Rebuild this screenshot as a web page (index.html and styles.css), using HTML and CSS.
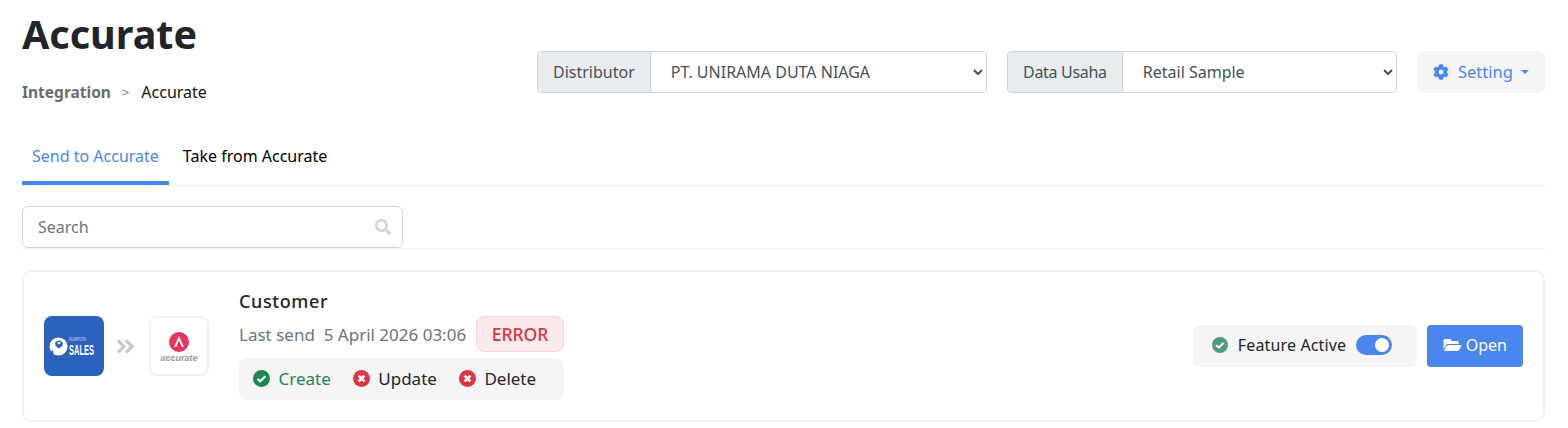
FILE: index.html
```html
<!DOCTYPE html>
<html lang="en">
<head>
    <meta charset="UTF-8">
    <meta name="viewport" content="width=device-width, initial-scale=1.0">
    <title>Accurate</title>
    <link rel="stylesheet" href="styles.css">
</head>
<body>

    <div class="page">
        <div class="page-head">
            <div class="page-title">
                <h1>Accurate</h1>
                <div class="breadcrumb">
                    <b>Integration</b>
                    <span class="crumb-sep">&gt;</span>
                    <span>Accurate</span>
                </div>
            </div>

            <div class="page-tools">
                <div class="input-group group-distributor">
                    <span class="group-label">Distributor</span>
                    <select class="group-select">
                        <option>PT. UNIRAMA DUTA NIAGA</option>
                    </select>
                </div>
                <div class="input-group group-usaha">
                    <span class="group-label">Data Usaha</span>
                    <select class="group-select">
                        <option>Retail Sample</option>
                    </select>
                </div>
                <button class="setting-button">
                    <svg class="icon" viewBox="0 0 512 512"><path d="M487.4 315.7l-42.6-24.6c4.3-23.2 4.3-47 0-70.2l42.6-24.6c4.9-2.8 7.1-8.6 5.5-14-11.1-35.6-30-67.8-54.7-94.6-3.8-4.1-10-5.1-14.8-2.3L380.8 110c-17.9-15.4-38.5-27.3-60.8-35.1V25.8c0-5.6-3.9-10.5-9.4-11.7-36.7-8.2-74.3-7.8-109.2 0-5.5 1.2-9.4 6.1-9.4 11.7V75c-22.2 7.9-42.8 19.8-60.8 35.1L88.7 85.5c-4.9-2.8-11-1.9-14.8 2.3-24.7 26.7-43.6 58.9-54.7 94.6-1.7 5.4.6 11.2 5.5 14L67.3 221c-4.3 23.2-4.3 47 0 70.2l-42.6 24.6c-4.9 2.8-7.1 8.6-5.5 14 11.1 35.6 30 67.8 54.7 94.6 3.8 4.1 10 5.1 14.8 2.3l42.6-24.6c17.9 15.4 38.5 27.3 60.8 35.1v49.2c0 5.6 3.9 10.5 9.4 11.7 36.7 8.2 74.3 7.8 109.2 0 5.5-1.2 9.4-6.1 9.4-11.7v-49.2c22.2-7.9 42.8-19.8 60.8-35.1l42.6 24.6c4.9 2.8 11 1.9 14.8-2.3 24.7-26.7 43.6-58.9 54.7-94.6 1.5-5.5-.7-11.3-5.6-14.1zM256 336c-44.1 0-80-35.9-80-80s35.9-80 80-80 80 35.9 80 80-35.9 80-80 80z"/></svg>
                    <span class="setting-label">Setting</span>
                    <i class="caret"></i>
                </button>
            </div>
        </div>

        <div class="tabs">
            <a class="tab active">Send to Accurate</a>
            <a class="tab">Take from Accurate</a>
        </div>

        <div class="search-row">
            <div class="search-box">
                <input class="search-input" type="text" placeholder="Search">
                <svg class="search-icon" viewBox="0 0 512 512"><path d="M505 442.7L405.3 343c-4.5-4.5-10.6-7-17-7H372c27.6-35.3 44-79.7 44-128C416 93.1 322.9 0 208 0S0 93.1 0 208s93.1 208 208 208c48.3 0 92.7-16.4 128-44v16.3c0 6.4 2.5 12.5 7 17l99.7 99.7c9.4 9.4 24.6 9.4 33.9 0l28.3-28.3c9.4-9.4 9.4-24.6.1-34zM208 336c-70.700 0-128-57.200-128-128 0-70.700 57.200-128 128-128 70.700 0 128 57.200 128 128 0 70.700-57.200 128-128 128z"/></svg>
            </div>
        </div>

        <div class="card">
            <div class="logos">
                <div class="logo logo-sales">
                    <svg class="sales-ball" viewBox="0 0 20 20">
                        <circle cx="10" cy="10" r="9.500" fill="#fff"/>
                        <path d="M10.500 3.500l4 2-.5 4-3.500 2.500-3.500-2.500-.5-4z" fill="#2a62bd"/>
                        <path d="M10.500 5l2 1.200-2 1.300-2-1.300z" fill="#fff"/>
                        <path d="M2 15l2-1 1 5-2.500 1z" fill="#2a62bd"/>
                    </svg>
                    <div class="sales-text">
                        <small>RUMPUTA</small>
                        <b>SALES</b>
                    </div>
                </div>
                <svg class="logo-arrows" viewBox="0 0 19 15"><path d="M2 1.500l6 6-6 6M10 1.500l6 6-6 6"/></svg>
                <div class="logo logo-accurate">
                    <svg class="accurate-mark" viewBox="0 0 20 20">
                        <circle cx="10" cy="10" r="10" fill="#e8345c"/>
                        <path d="M10 4L15 15h-2.200L10 8.500 7.200 15H5z" fill="#fff"/>
                    </svg>
                    <span class="accurate-text">accurate</span>
                </div>
            </div>

            <div class="card-info">
                <div class="card-title">Customer</div>
                <div class="card-send">
                    <span>Last send&nbsp; 5 April 2026 03:06</span>
                    <span class="badge-error">ERROR</span>
                </div>
                <div class="card-actions">
                    <span class="action action-ok">
                        <svg class="action-icon" viewBox="0 0 16 16"><circle cx="8" cy="8" r="8" fill="#198754"/><path d="M4.300 8.200l2.500 2.500 4.900-4.900" fill="none" stroke="#fff" stroke-width="2"/></svg>
                        Create
                    </span>
                    <span class="action">
                        <svg class="action-icon" viewBox="0 0 16 16"><circle cx="8" cy="8" r="8" fill="#dc3545"/><path d="M5.300 5.300l5.400 5.400M10.700 5.300l-5.400 5.400" fill="none" stroke="#fff" stroke-width="2.600"/></svg>
                        Update
                    </span>
                    <span class="action">
                        <svg class="action-icon" viewBox="0 0 16 16"><circle cx="8" cy="8" r="8" fill="#dc3545"/><path d="M5.300 5.300l5.400 5.400M10.700 5.300l-5.400 5.400" fill="none" stroke="#fff" stroke-width="2.600"/></svg>
                        Delete
                    </span>
                </div>
            </div>

            <div class="card-right">
                <div class="feature">
                    <svg class="icon" viewBox="0 0 16 16"><circle cx="8" cy="8" r="8" fill="#529a7f"/><path d="M4.300 8.200l2.500 2.500 4.900-4.900" fill="none" stroke="#fff" stroke-width="2"/></svg>
                    <span>Feature Active</span>
                    <span class="switch"><i></i></span>
                </div>
                <button class="open-button">
                    <svg class="icon-open" viewBox="0 0 576 512"><path d="M572.700 292.100L500.300 416.200A63.900 63.900 0 0 1 445.100 448H45.800c-18.500 0-30.100-20.100-20.700-36.100l72.400-124.200A64 64 0 0 1 152.700 256h399.300c18.500 0 30.100 20.100 20.700 36.100zM152.700 224h328.300v-48c0-26.500-21.500-48-48-48H272l-64-64H48C21.500 64 0 85.500 0 112v278l69.100-118.400C86.200 242.300 118.200 224 152.700 224z"/></svg>
                    Open
                </button>
            </div>
        </div>
    </div>

</body>
</html>
```

FILE: styles.css
```css
body {
    margin: 0;
    font-family: "Noto Sans", "Open Sans", sans-serif;
    font-size: 16px;
    color: #212529;
    background-color: #fff;
}

.page {
    padding: 0 23px 0 22px;
}

/* header */
.page-head {
    display: flex;
    justify-content: space-between;
    height: 130px;
}
.page-title h1 {
    margin: 11px 0 0;
    font-size: 39.5px;
    line-height: 46px;
    font-weight: 700;
}
.breadcrumb {
    margin-top: 24px;
    display: flex;
    align-items: center;
    font-size: 16px;
    line-height: 22px;
    color: #111;
}
.breadcrumb b {
    font-size: 15.5px;
    color: #6c6c6c;
}
.crumb-sep {
    margin: 0 12px 0 11px;
    font-size: 13px;
    color: #6c757d;
}
.page-tools {
    display: flex;
    align-items: flex-start;
    gap: 20px;
    padding-top: 51px;
}

.input-group {
    display: flex;
    height: 42px;
    box-sizing: border-box;
    border: 1px solid #ced4da;
    border-radius: 4px;
}
.group-distributor {
    width: 450px;
}
.group-usaha {
    width: 390px;
}
.group-label {
    padding: 0 15px;
    line-height: 40px;
    color: #495057;
    background-color: #e9ecef;
    border-right: 1px solid #ced4da;
    border-radius: 3px 0 0 3px;
}
.group-usaha .group-label {
    letter-spacing: -.3px;
}
.group-select {
    flex: 1;
    min-width: 0;
    padding: 0 12px 0 16px;
    border: none;
    font-family: inherit;
    font-size: 16px;
    color: #495057;
    background-color: #fff;
    border-radius: 0 4px 4px 0;
}

.setting-button {
    display: flex;
    align-items: center;
    gap: 9px;
    width: 128px;
    height: 42px;
    padding: 0 16px;
    border: none;
    border-radius: 6px;
    font-family: inherit;
    font-size: 16.5px;
    color: #4a86f0;
    background-color: #f5f5f5;
    fill: #4a86f0;
}
.setting-label {
    margin: -2px -1px 0 0;
}
.caret {
    width: 0;
    height: 0;
    border-top: 4px solid #4a86f0;
    border-left: 4px solid transparent;
    border-right: 4px solid transparent;
}
.icon {
    width: 16px;
    height: 16px;
    flex: none;
}

/* tabs */
.tabs {
    display: flex;
    height: 55px;
    border-bottom: 1px solid #eee;
}
.tab {
    height: 55px;
    box-sizing: border-box;
    padding: 14px 10px 0;
    line-height: 24px;
    color: #000;
}
.tab.active {
    margin-right: 4px;
    color: #4a86f0;
    border-bottom: 4px solid #4a86f0;
}

/* search */
.search-row {
    padding-top: 20px;
    border-bottom: 1px solid #eee;
}
.search-box {
    position: relative;
    width: 381px;
}
.search-input {
    display: block;
    width: 100%;
    height: 42px;
    box-sizing: border-box;
    padding: 0 15px;
    border: 1px solid #ced4da;
    border-radius: 6px;
    font-family: inherit;
    font-size: 16px;
    outline: none;
}
.search-input::placeholder {
    color: #6c757d;
}
.search-icon {
    position: absolute;
    top: 13px;
    right: 12px;
    width: 16px;
    height: 16px;
    fill: #ced4da;
}

/* card */
.card {
    display: flex;
    align-items: center;
    height: 152px;
    box-sizing: border-box;
    margin-top: 21px;
    padding: 0 20px;
    border: 2px solid #f1f1f1;
    border-radius: 10px;
}
.logos {
    display: flex;
    align-items: center;
    width: 195px;
    flex: none;
}
.logo {
    width: 60px;
    height: 60px;
    box-sizing: border-box;
    border-radius: 8px;
    flex: none;
}
.logo-sales {
    display: flex;
    align-items: center;
    gap: 1px;
    padding-left: 5px;
    background-color: #2a62bd;
}
.sales-ball {
    width: 19px;
    height: 19px;
    flex: none;
}
.sales-text {
    display: flex;
    flex-direction: column;
    color: #fff;
    font-family: "Liberation Sans", sans-serif;
    line-height: 1;
}
.sales-text small {
    font-size: 6px;
    line-height: 7px;
    opacity: .75;
    transform: scaleX(.58);
    transform-origin: left;
}
.sales-text b {
    font-size: 15px;
    line-height: 13px;
    font-weight: 700;
    transform: scaleX(.5);
    transform-origin: left;
}
.logo-arrows {
    width: 19px;
    height: 15px;
    margin: 0 14px 0 12px;
    fill: none;
    stroke: #c8cbc8;
    stroke-width: 3.4px;
}
.logo-accurate {
    display: flex;
    flex-direction: column;
    align-items: center;
    gap: 2px;
    padding-top: 14px;
    border: 2px solid #f1f1f1;
}
.accurate-mark {
    width: 20px;
    height: 20px;
}
.accurate-text {
    font-family: "Liberation Sans", sans-serif;
    font-size: 9px;
    line-height: 9px;
    font-weight: 700;
    font-style: italic;
    color: #999;
}

.card-info {
    width: 325px;
    flex: none;
    margin-bottom: 2px;
}
.card-title {
    font-size: 18px;
    line-height: 22px;
    letter-spacing: .6px;
    font-weight: 500;
}
.card-send {
    display: flex;
    align-items: center;
    justify-content: space-between;
    margin-top: 4px;
    font-size: 17px;
    color: #6c757d;
}
.badge-error {
    width: 88px;
    box-sizing: border-box;
    text-align: center;
    font-size: 17.5px;
    line-height: 34px;
    font-weight: 500;
    color: #dc3545;
    background-color: #fbe9eb;
    border: 1px solid #f8d4d8;
    border-radius: 8px;
}
.card-actions {
    display: flex;
    gap: 22px;
    height: 42px;
    box-sizing: border-box;
    align-items: center;
    margin-top: 6px;
    padding: 0 14px 2px;
    border-radius: 8px;
    font-size: 17px;
    background-color: #f5f5f5;
}
.action {
    display: flex;
    align-items: center;
    gap: 8.5px;
}
.action-icon {
    width: 17px;
    height: 17px;
    flex: none;
}
.action-ok {
    color: #198754;
}

.card-right {
    display: flex;
    gap: 10px;
    margin-left: auto;
}
.feature {
    display: flex;
    align-items: center;
    gap: 10px;
    width: 224px;
    height: 42px;
    box-sizing: border-box;
    padding: 0 19px 2px;
    border-radius: 6px;
    letter-spacing: .15px;
    background-color: #f5f5f5;
}
.switch {
    position: relative;
    width: 36px;
    height: 20px;
    border-radius: 10px;
    background-color: #4a86f0;
}
.switch i {
    position: absolute;
    top: 3px;
    right: 3px;
    width: 14px;
    height: 14px;
    border-radius: 50%;
    background-color: #fff;
}
.open-button {
    display: flex;
    align-items: center;
    gap: 4px;
    height: 42px;
    padding: 0 16px 2px;
    border: none;
    border-radius: 4px;
    font-family: inherit;
    font-size: 16px;
    color: #fff;
    background-color: #4a86f0;
}
.icon-open {
    width: 19px;
    height: 16px;
    fill: #fff;
}
```
